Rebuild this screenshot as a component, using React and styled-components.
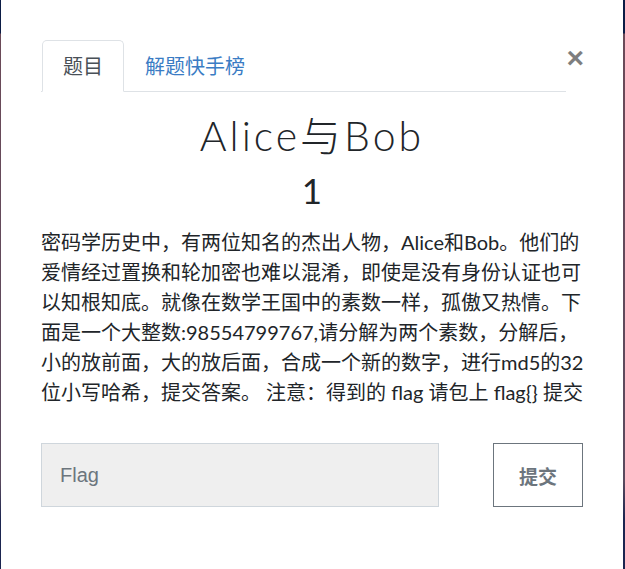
import { useState } from "react";
import styled, { createGlobalStyle } from "styled-components";

const Global = createGlobalStyle`
html, body {
  margin: 0;
  padding: 0;
}
body {
  background: linear-gradient(180deg, #0b1c45 0px, #0b1c45 33px, #6b4a58 34px, #5a4a5e 480px, #1b2550 520px);
  font-family: "Lato", "Noto Sans CJK SC", sans-serif;
  font-size: 20px;
  color: #212529;
}
`

const Modal = styled.div`
background: #fff;
margin: 0 2px 0 1px;
min-height: 100vh;
box-sizing: border-box;
padding: 40px 40px 0 40px;
`
const Header = styled.div`
display: flex;
align-items: flex-start;
`
const Tabs = styled.ul`
flex: 1;
display: flex;
list-style: none;
margin: 0;
padding: 0;
border-bottom: 1px solid #dee2e6;
`
const Tab = styled.li`
margin-bottom: -1px;
margin-left: ${p => (p.$first ? "1px" : "0")};
`
const TabLink = styled.a`
display: block;
padding: 10px 20px;
font-size: 20px;
line-height: 30px;
cursor: pointer;
text-decoration: none;
border: 1px solid transparent;
border-color: ${p => (p.$active ? "#dee2e6 #dee2e6 #fff" : "transparent")};
border-radius: 5px 5px 0 0;
color: ${p => (p.$active ? "#495057" : "#3a7cc4")};
background: ${p => (p.$active ? "#fff" : "transparent")};
`
const Close = styled.button`
border: none;
background: none;
padding: 0;
margin: 3px -1px 0 0;
font-family: "Liberation Sans", sans-serif;
font-size: 30px;
font-weight: 700;
line-height: 1;
color: #000;
opacity: 0.5;
cursor: pointer;
`
const Title = styled.h2`
margin: 0;
padding-top: 20px;
text-align: center;
font-family: "Lato", "Noto Sans CJK SC", sans-serif;
font-weight: 300;
font-size: 41px;
line-height: 48px;
letter-spacing: 3px;
color: #212529;
`
const Value = styled.h3`
margin: 9px 0 0;
text-align: center;
font-weight: 400;
font-size: 35px;
line-height: 42px;
`
const Description = styled.p`
margin: 16px -8px 0 0;
font-size: 20px;
line-height: 30px;
`
const FormRow = styled.form`
display: flex;
justify-content: space-between;
align-items: center;
margin-top: 36px;
padding-left: 0;
`
const FlagInput = styled.input`
width: 398px;
height: 64px;
box-sizing: border-box;
padding: 0 18px;
background: #efefef;
border: 1px solid #cfd6dc;
font-family: "Liberation Sans", sans-serif;
font-size: 20px;
color: #495057;
outline: none;
&::placeholder {
  color: #6c757d;
}
`
const Submit = styled.button`
width: 90px;
height: 64px;
background: #fff;
border: 1px solid #6c757d;
color: #6c757d;
font-family: "Noto Sans CJK SC", sans-serif;
font-weight: 700;
font-size: 19px;
cursor: pointer;
`

export default function App() {
  const [tab, setTab] = useState(0)
  const [flag, setFlag] = useState("")

  return (
    <>
      <Global />
      <Modal>
        <Header>
          <Tabs>
            <Tab $first>
              <TabLink $active={tab === 0} onClick={() => setTab(0)}>题目</TabLink>
            </Tab>
            <Tab>
              <TabLink $active={tab === 1} onClick={() => setTab(1)}>解题快手榜</TabLink>
            </Tab>
          </Tabs>
          <Close aria-label="Close">×</Close>
        </Header>
        <Title>Alice与Bob</Title>
        <Value>1</Value>
        <Description>
          密码学历史中，有两位知名的杰出人物，Alice和Bob。他们的爱情经过置换和轮加密也难以混淆，即使是没有身份认证也可以知根知底。就像在数学王国中的素数一样，孤傲又热情。下面是一个大整数:98554799767,请分解为两个素数，分解后，小的放前面，大的放后面，合成一个新的数字，进行md5的32位小写哈希，提交答案。 注意：得到的 flag 请包上 {"flag{}"} 提交
        </Description>
        <FormRow onSubmit={e => e.preventDefault()}>
          <FlagInput placeholder="Flag" value={flag} onChange={e => setFlag(e.target.value)} />
          <Submit type="submit">提交</Submit>
        </FormRow>
      </Modal>
    </>
  )
}
